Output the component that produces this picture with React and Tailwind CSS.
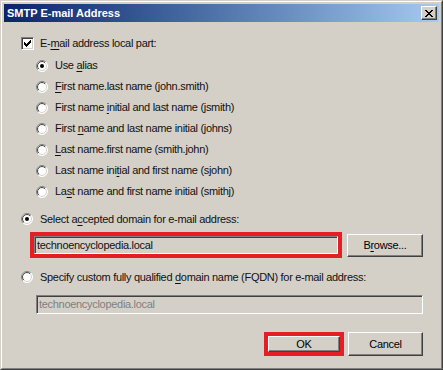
import React from "react";

const font = { fontFamily: '"Liberation Sans", Arial, sans-serif' };

function U({ children }) {
  return <span className="underline underline-offset-[2px]">{children}</span>;
}

function Radio({ checked }) {
  return (
    <svg width="12" height="12" viewBox="0 0 12 12" className="shrink-0">
      <defs>
        <linearGradient id="rgo" x1="0" y1="0" x2="1" y2="1">
          <stop offset="0.5" stopColor="#808080" />
          <stop offset="0.5" stopColor="#ffffff" />
        </linearGradient>
        <linearGradient id="rgi" x1="0" y1="0" x2="1" y2="1">
          <stop offset="0.5" stopColor="#404040" />
          <stop offset="0.5" stopColor="#d4d0c8" />
        </linearGradient>
      </defs>
      <circle cx="6" cy="6" r="5.5" fill="#fff" stroke="url(#rgo)" strokeWidth="1" />
      <circle cx="6" cy="6" r="4.5" fill="#fff" stroke="url(#rgi)" strokeWidth="1" />
      {checked && <circle cx="6" cy="6" r="2" fill="#000" />}
    </svg>
  );
}

function Checkbox() {
  return (
    <div className="w-[13px] h-[13px] shrink-0 bg-white border border-t-[#808080] border-l-[#808080] border-r-white border-b-white shadow-[inset_1px_1px_0_#404040,inset_-1px_-1px_0_#d4d0c8] flex items-center justify-center">
      <svg width="7" height="7" viewBox="0 0 7 7">
        <path d="M0 2h1v1h1v1h1v-1h1v-1h1v-1h1v-1h1v3h-1v1h-1v1h-1v1h-1v1h-1v-1h-1v-1h-1z" fill="#000" />
      </svg>
    </div>
  );
}

function Button({ children, className = "" }) {
  return (
    <div
      className={
        "flex items-center justify-center bg-[#d4d0c8] border border-t-white border-l-white border-r-[#404040] border-b-[#404040] shadow-[inset_-1px_-1px_0_#808080] text-[11px] text-black " +
        className
      }
    >
      {children}
    </div>
  );
}

function RadioRow({ checked, children, h = "h-[21px]" }) {
  return (
    <div className={"flex items-center gap-[7px] " + h}>
      <Radio checked={checked} />
      <span>{children}</span>
    </div>
  );
}

export default function App() {
  return (
    <div
      style={font}
      className="w-[443px] h-[370px] border border-t-[#d4d0c8] border-l-[#d4d0c8] border-r-[#404040] border-b-[#404040] text-[11px] tracking-[-0.3px] text-[#111] leading-none"
    >
      <div className="w-full h-full border border-t-white border-l-white border-r-[#808080] border-b-[#808080] bg-[#d4d0c8] p-[2px] flex flex-col">
        {/* Title bar */}
        <div className="h-[18px] shrink-0 bg-gradient-to-r from-[#0a246a] to-[#a6caf0] flex items-center justify-between pl-[3px] pr-[2px]">
          <span className="text-white font-bold text-[11px] tracking-normal">SMTP E-mail Address</span>
          <Button className="w-[16px] h-[14px]">
            <svg width="8" height="7" viewBox="0 0 8 7">
              <path d="M0 0h2v1h1v1h2v-1h1v-1h2v1h-1v1h-1v1h-1v1h1v1h1v1h1v1h-2v-1h-1v-1h-2v1h-1v1h-2v-1h1v-1h1v-1h1v-1h-1v-1h-1v-1h-1z" fill="#000" />
            </svg>
          </Button>
        </div>

        {/* Body */}
        <div className="flex-1 flex flex-col pl-[17px] pr-[16px]">
          <div className="mt-[15px] h-[13px] flex items-center gap-[6px]">
            <Checkbox />
            <span>
              E-<U>m</U>ail address local part:
            </span>
          </div>

          <div className="mt-[5px] pl-[15px] flex flex-col">
            <RadioRow checked>
              Use <U>a</U>lias
            </RadioRow>
            <RadioRow>
              <U>F</U>irst name.last name (john.smith)
            </RadioRow>
            <RadioRow>
              First name <U>i</U>nitial and last name (jsmith)
            </RadioRow>
            <RadioRow>
              First <U>n</U>ame and last name initial (johns)
            </RadioRow>
            <RadioRow>
              <U>L</U>ast name.first name (smith.john)
            </RadioRow>
            <RadioRow>
              Last name ini<U>t</U>ial and first name (sjohn)
            </RadioRow>
            <RadioRow>
              La<U>s</U>t name and first name initial (smithj)
            </RadioRow>
          </div>

          <div className="mt-[7px] h-[20px] flex items-center gap-[7px]">
            <Radio checked />
            <span>
              Select a<U>c</U>cepted domain for e-mail address:
            </span>
          </div>

          <div className="mt-[3px] h-[26px] flex items-center">
            <div className="ml-[9px] w-[312px] h-[26px] border-[4px] border-[#e31e24] flex">
              <div className="flex-1 bg-[#d4d0c8] border border-t-[#808080] border-l-[#808080] border-r-white border-b-white shadow-[inset_1px_1px_0_#404040,inset_-1px_-1px_0_#d4d0c8] flex items-center pl-[2px]">
                technoencyclopedia.local
              </div>
            </div>
            <Button className="ml-[5px] w-[76px] h-[23px]">
              B<U>r</U>owse...
            </Button>
          </div>

          <div className="mt-[9px] h-[20px] flex items-center gap-[7px]">
            <Radio />
            <span>
              Specify custom fully qualified <U>d</U>omain name (FQDN) for e-mail address:
            </span>
          </div>

          <div className="mt-[8px] ml-[15px] w-[387px] h-[19px] border border-t-[#808080] border-l-[#808080] border-r-white border-b-white shadow-[inset_1px_1px_0_#404040,inset_-1px_-1px_0_#d4d0c8] flex items-center pl-[2px] text-[#808080]">
            technoencyclopedia.local
          </div>

          <div className="mt-[18px] h-[24px] flex items-center justify-end">
            <div className="w-[80px] h-[24px] border-[4px] border-[#e31e24] flex">
              <Button className="flex-1">OK</Button>
            </div>
            <Button className="ml-[4px] w-[75px] h-[24px]">Cancel</Button>
          </div>
        </div>
      </div>
    </div>
  );
}
